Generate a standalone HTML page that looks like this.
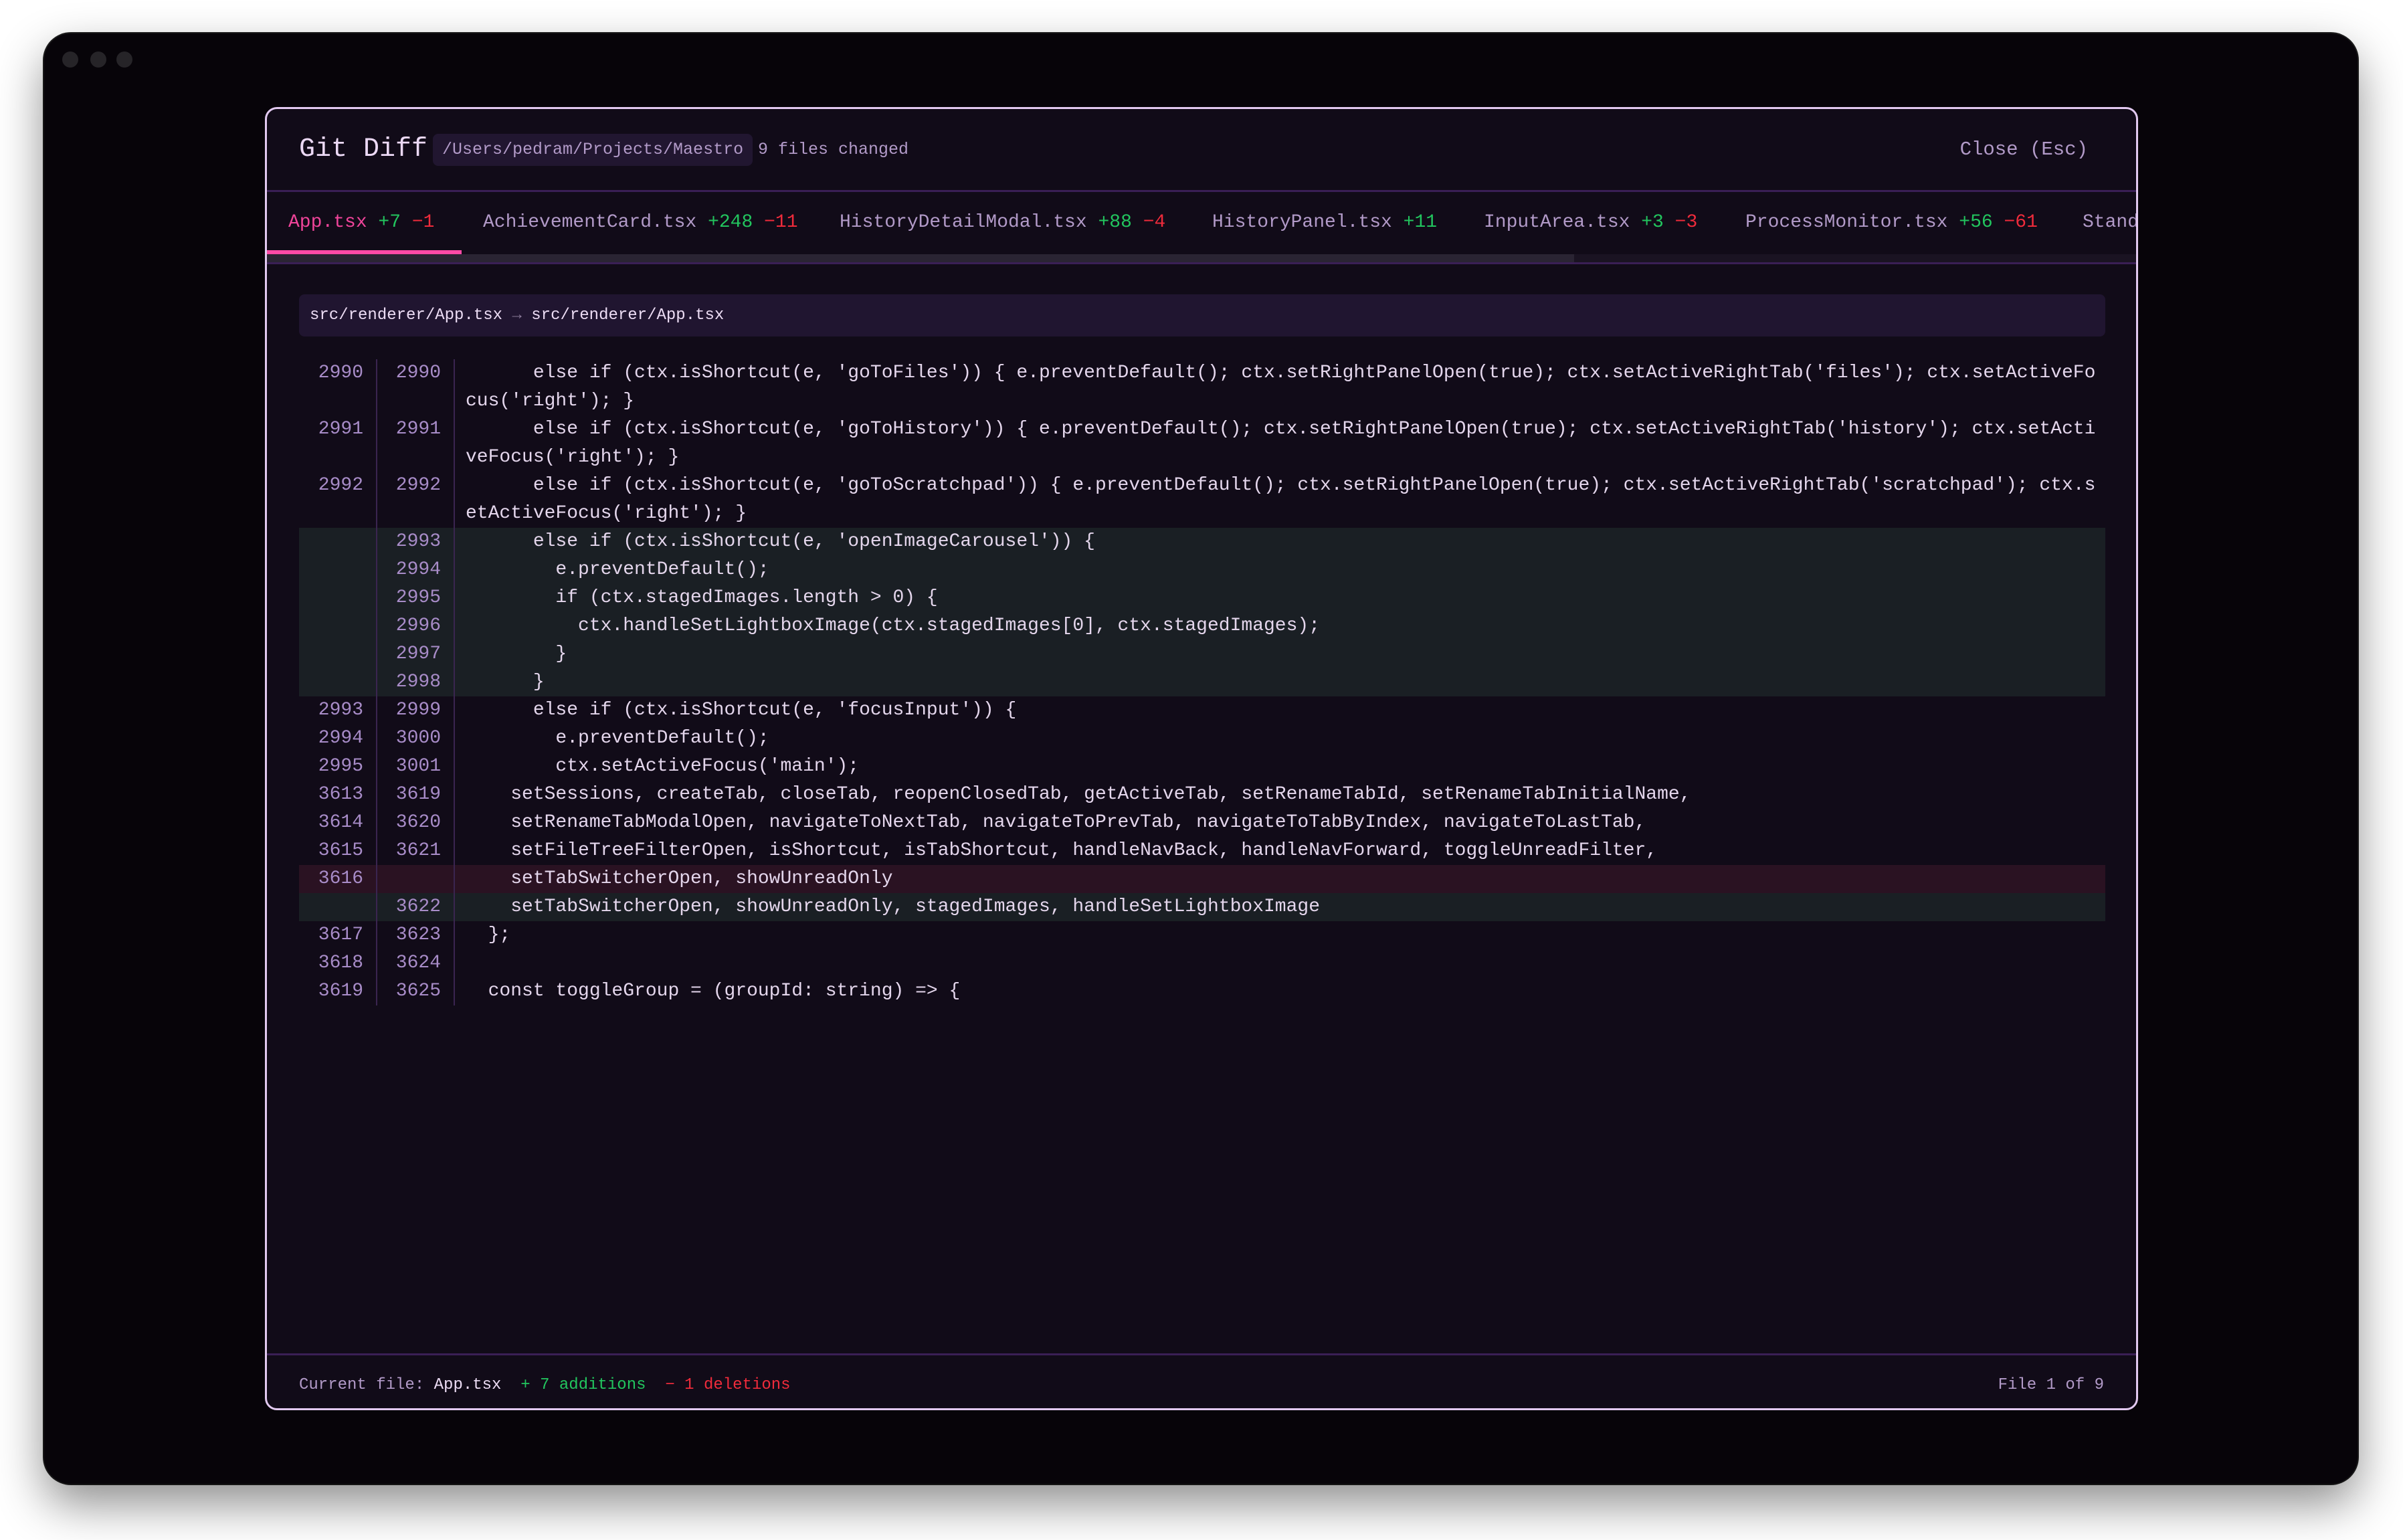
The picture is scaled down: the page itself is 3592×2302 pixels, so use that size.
<!DOCTYPE html>
<html><head><meta charset="utf-8"><style>
*{margin:0;padding:0;box-sizing:border-box}
html,body{width:3592px;height:2302px;background:#fff;overflow:hidden;font-family:"Liberation Mono",monospace}
.win{position:absolute;left:66px;top:50px;width:3458px;height:2168px;background:#070409;border-radius:40px;box-shadow:0 30px 70px rgba(0,0,0,.45),0 0 0 2px #1e1e1e}
.dot{position:absolute;top:27px;width:24px;height:24px;border-radius:50%;background:#262428}
.modal{position:absolute;left:396px;top:160px;width:2800px;height:1948px;background:#110b18;border:3px solid #e2c9f0;border-radius:18px;overflow:hidden}
.hdr{position:absolute;left:0;top:0;width:100%;height:124px;border-bottom:3px solid #3a1f55}
.title{position:absolute;left:48px;top:38px;font-size:40px;color:#ecd9f5;font-weight:normal}
.badge{position:absolute;left:248px;top:37px;height:48px;padding:0 14px;background:#211630;border-radius:8px;font-size:25px;line-height:48px;color:#b29ac8}
.changed{position:absolute;left:734px;top:37px;line-height:48px;font-size:25px;color:#b29ac8}
.close{position:absolute;right:72px;top:37px;line-height:48px;font-size:29px;color:#b29ac8}
.tabs{position:absolute;left:0;top:127px;width:100%;height:90px;white-space:nowrap;font-size:28px;color:#b29ac8}
.tab{position:absolute;top:0;height:86px;line-height:86px}
.g{color:#22c55e}.r{color:#ef2b3b}
.act{color:#f0449a}
.under{position:absolute;left:0;top:84px;width:291px;height:6px;background:#ff4aa6}
.track{position:absolute;left:0;top:217px;width:100%;height:12px;background:#1a1322}
.thumb{position:absolute;left:0;top:217px;width:1954px;height:12px;background:#2a2433}
.tabbot{position:absolute;left:0;top:229px;width:100%;height:3px;background:#3a1f55}
.fh{position:absolute;left:48px;top:277px;width:2700px;height:63px;background:#201530;border-radius:8px;font-size:24px;line-height:63px;padding-left:16px;color:#ecdcf4}
.fh span{color:#8a7a98}
.code{position:absolute;left:48px;top:374px;width:2700px}
.row{display:flex;font-size:28px;line-height:42px;color:#e4d6ec}
.n{width:117px;text-align:right;padding-right:19px;color:#a88cc8;border-right:2px solid #3a2550;flex:none}
.n2{width:116px}
.c{padding-left:16px;white-space:pre;flex:1}
.add{background:#1a1f24}
.del{background:#2a1222}
.foot{position:absolute;left:0;top:1860px;width:100%;height:3px;background:#3a1f55}
.ft{position:absolute;top:1888px;font-size:24px;line-height:40px;color:#b29ac8;white-space:pre}
</style></head><body>
<div class="win">
<div class="dot" style="left:27px"></div><div class="dot" style="left:69px"></div><div class="dot" style="left:108px"></div>
</div>
<div class="modal">
<div class="hdr">
<div class="title">Git Diff</div>
<div class="badge">/Users/pedram/Projects/Maestro</div>
<div class="changed">9 files changed</div>
<div class="close">Close (Esc)</div>
</div>
<div class="tabs">
<div class="tab act" style="left:32px">App.tsx <span class="g">+7</span> <span class="r">−1</span></div>
<div class="tab" style="left:323px">AchievementCard.tsx <span class="g">+248</span> <span class="r">−11</span></div>
<div class="tab" style="left:856px">HistoryDetailModal.tsx <span class="g">+88</span> <span class="r">−4</span></div>
<div class="tab" style="left:1413px">HistoryPanel.tsx <span class="g">+11</span></div>
<div class="tab" style="left:1819px">InputArea.tsx <span class="g">+3</span> <span class="r">−3</span></div>
<div class="tab" style="left:2210px">ProcessMonitor.tsx <span class="g">+56</span> <span class="r">−61</span></div>
<div class="tab" style="left:2714px">StandingOvation.tsx</div>
<div class="under"></div>
</div>
<div class="track"></div><div class="thumb"></div><div class="tabbot"></div>
<div class="fh">src/renderer/App.tsx <span>→</span> src/renderer/App.tsx</div>
<div class="code">
<div class="row"><div class="n">2990</div><div class="n n2">2990</div><div class="c">      else if (ctx.isShortcut(e, 'goToFiles')) { e.preventDefault(); ctx.setRightPanelOpen(true); ctx.setActiveRightTab('files'); ctx.setActiveFo
cus('right'); }</div></div>
<div class="row"><div class="n">2991</div><div class="n n2">2991</div><div class="c">      else if (ctx.isShortcut(e, 'goToHistory')) { e.preventDefault(); ctx.setRightPanelOpen(true); ctx.setActiveRightTab('history'); ctx.setActi
veFocus('right'); }</div></div>
<div class="row"><div class="n">2992</div><div class="n n2">2992</div><div class="c">      else if (ctx.isShortcut(e, 'goToScratchpad')) { e.preventDefault(); ctx.setRightPanelOpen(true); ctx.setActiveRightTab('scratchpad'); ctx.s
etActiveFocus('right'); }</div></div>
<div class="row add"><div class="n"></div><div class="n n2">2993</div><div class="c">      else if (ctx.isShortcut(e, 'openImageCarousel')) {</div></div>
<div class="row add"><div class="n"></div><div class="n n2">2994</div><div class="c">        e.preventDefault();</div></div>
<div class="row add"><div class="n"></div><div class="n n2">2995</div><div class="c">        if (ctx.stagedImages.length > 0) {</div></div>
<div class="row add"><div class="n"></div><div class="n n2">2996</div><div class="c">          ctx.handleSetLightboxImage(ctx.stagedImages[0], ctx.stagedImages);</div></div>
<div class="row add"><div class="n"></div><div class="n n2">2997</div><div class="c">        }</div></div>
<div class="row add"><div class="n"></div><div class="n n2">2998</div><div class="c">      }</div></div>
<div class="row"><div class="n">2993</div><div class="n n2">2999</div><div class="c">      else if (ctx.isShortcut(e, 'focusInput')) {</div></div>
<div class="row"><div class="n">2994</div><div class="n n2">3000</div><div class="c">        e.preventDefault();</div></div>
<div class="row"><div class="n">2995</div><div class="n n2">3001</div><div class="c">        ctx.setActiveFocus('main');</div></div>
<div class="row"><div class="n">3613</div><div class="n n2">3619</div><div class="c">    setSessions, createTab, closeTab, reopenClosedTab, getActiveTab, setRenameTabId, setRenameTabInitialName,</div></div>
<div class="row"><div class="n">3614</div><div class="n n2">3620</div><div class="c">    setRenameTabModalOpen, navigateToNextTab, navigateToPrevTab, navigateToTabByIndex, navigateToLastTab,</div></div>
<div class="row"><div class="n">3615</div><div class="n n2">3621</div><div class="c">    setFileTreeFilterOpen, isShortcut, isTabShortcut, handleNavBack, handleNavForward, toggleUnreadFilter,</div></div>
<div class="row del"><div class="n">3616</div><div class="n n2"></div><div class="c">    setTabSwitcherOpen, showUnreadOnly</div></div>
<div class="row add"><div class="n"></div><div class="n n2">3622</div><div class="c">    setTabSwitcherOpen, showUnreadOnly, stagedImages, handleSetLightboxImage</div></div>
<div class="row"><div class="n">3617</div><div class="n n2">3623</div><div class="c">  };</div></div>
<div class="row"><div class="n">3618</div><div class="n n2">3624</div><div class="c"> </div></div>
<div class="row"><div class="n">3619</div><div class="n n2">3625</div><div class="c">  const toggleGroup = (groupId: string) => {</div></div>
</div>
<div class="foot"></div>
<div class="ft" style="left:48px">Current file: <span style="color:#ecdcf4">App.tsx</span>  <span class="g">+ 7 additions</span>  <span class="r">− 1 deletions</span></div>
<div class="ft" style="right:48px">File 1 of 9</div>
</div>
</body></html>
